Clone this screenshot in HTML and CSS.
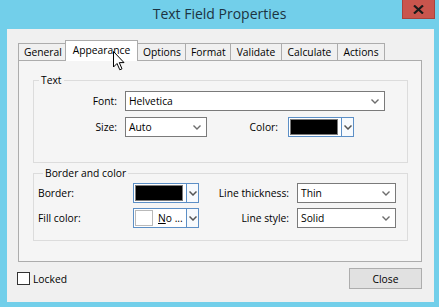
FILE: index.html
```html
<!DOCTYPE html>
<html lang="en">
<head>
<meta charset="UTF-8">
<meta name="viewport" content="width=device-width, initial-scale=1.0">
<title>Text Field Properties</title>
<link rel="stylesheet" href="styles.css">
</head>
<body>
<div class="window">
  <div class="titlebar">
    <span></span>
    <span class="title">Text Field Properties</span>
    <button class="close-x" aria-label="Close">
      <svg width="11" height="9" viewBox="0 0 11 9"><path d="M1 0.5 L10 8.5 M10 0.5 L1 8.5" stroke="#1a1a1a" stroke-width="2.2"/></svg>
    </button>
  </div>

  <div class="client">
    <div class="tabs">
      <div class="tab">General</div>
      <div class="tab active">Appearance</div>
      <div class="tab">Options</div>
      <div class="tab">Format</div>
      <div class="tab">Validate</div>
      <div class="tab">Calculate</div>
      <div class="tab">Actions</div>
    </div>

    <div class="panel">
      <fieldset class="group">
        <legend>Text</legend>
        <div class="row">
          <span class="label right w-font">Font:</span>
          <div class="combo w-260">Helvetica<svg class="chev" width="8" height="5" viewBox="0 0 8 5"><polyline points="0.5,0.5 4,4 7.5,0.5" fill="none" stroke="#6d6d6d" stroke-width="1.4"/></svg></div>
        </div>
        <div class="row">
          <span class="label right w-font">Size:</span>
          <div class="combo w-82">Auto<svg class="chev" width="8" height="5" viewBox="0 0 8 5"><polyline points="0.5,0.5 4,4 7.5,0.5" fill="none" stroke="#6d6d6d" stroke-width="1.4"/></svg></div>
          <span class="label right w-color">Color:</span>
          <div class="picker">
            <span class="swatch black"></span>
            <span class="drop"><svg width="8" height="5" viewBox="0 0 8 5"><polyline points="0.5,0.5 4,4 7.5,0.5" fill="none" stroke="#555" stroke-width="1.5"/></svg></span>
          </div>
        </div>
      </fieldset>

      <fieldset class="group group-border">
        <legend>Border and color</legend>
        <div class="row">
          <span class="label w-border">Border:</span>
          <div class="picker">
            <span class="swatch black"></span>
            <span class="drop"><svg width="8" height="5" viewBox="0 0 8 5"><polyline points="0.5,0.5 4,4 7.5,0.5" fill="none" stroke="#555" stroke-width="1.5"/></svg></span>
          </div>
          <span class="label right w-line">Line thickness:</span>
          <div class="combo w-99">Thin<svg class="chev" width="8" height="5" viewBox="0 0 8 5"><polyline points="0.5,0.5 4,4 7.5,0.5" fill="none" stroke="#6d6d6d" stroke-width="1.4"/></svg></div>
        </div>
        <div class="row">
          <span class="label w-border">Fill color:</span>
          <div class="picker">
            <span class="swatch white"></span>
            <span class="none"><u>N</u>o ...</span>
            <span class="drop"><svg width="8" height="5" viewBox="0 0 8 5"><polyline points="0.5,0.5 4,4 7.5,0.5" fill="none" stroke="#555" stroke-width="1.5"/></svg></span>
          </div>
          <span class="label right w-line">Line style:</span>
          <div class="combo w-99">Solid<svg class="chev" width="8" height="5" viewBox="0 0 8 5"><polyline points="0.5,0.5 4,4 7.5,0.5" fill="none" stroke="#6d6d6d" stroke-width="1.4"/></svg></div>
        </div>
      </fieldset>
    </div>

    <div class="footer">
      <label class="check"><span class="box"></span>Locked</label>
      <button class="btn">Close</button>
    </div>

    <!-- mouse pointer over the Appearance tab -->
    <svg class="cursor" width="13" height="20" viewBox="0 0 13 20">
      <path d="M0.5 0.5 L0.5 16 L4 12.5 L6.8 18.8 L9 17.8 L6.3 11.6 L11 11.6 Z" fill="#fff" stroke="#000" stroke-width="1"/>
    </svg>
  </div>
</div>
</body>
</html>
```

FILE: styles.css
```css
html, body {
  margin: 0;
  padding: 0;
}
body {
  width: 439px;
  height: 307px;
  background-color: #72cfea;
  font-family: "Open Sans", "Noto Sans", sans-serif;
  font-size: 10.3px;
  color: #000;
  overflow: hidden;
}
.window {
  display: flex;
  flex-direction: column;
  height: 307px;
}
.titlebar {
  display: grid;
  grid-template-columns: 1fr auto 1fr;
  height: 29px;
}
.title {
  font-size: 14px;
  line-height: 27px;
  color: #1c3341;
  white-space: nowrap;
}
.close-x {
  justify-self: end;
  align-self: start;
  width: 33px;
  height: 19px;
  margin-right: 4px;
  padding: 0;
  border: 1px solid #a8433c;
  border-top: none;
  background-color: #c9554d;
  display: flex;
  align-items: center;
  justify-content: center;
}
.client {
  position: relative;
  flex: 1;
  margin: 0 5px 5px 7px;
  padding: 11px 12px 0 11px;
  background-color: #f0f0f0;
}
.tabs {
  display: flex;
  align-items: flex-end;
  height: 20px;
}
.tab {
  height: 17px;
  line-height: 16px;
  padding: 0 5px;
  margin-left: -1px;
  border: 1px solid #acacac;
  border-bottom: none;
  background-color: #f0f0f0;
  box-sizing: border-box;
  text-align: center;
  white-space: nowrap;
}
.tab:first-child {
  margin-left: 0;
}
.tab:nth-child(1) { width: 48px; }
.tab:nth-child(2) { width: 73px; }
.tab:nth-child(3) { width: 49px; }
.tab:nth-child(4) { width: 46px; }
.tab:nth-child(5) { width: 52px; }
.tab:nth-child(6) { width: 57px; }
.tab:nth-child(7) { width: 48px; }
.tab.active {
  position: relative;
  z-index: 1;
  height: 21px;
  line-height: 18px;
  margin-bottom: -1px;
  background-color: #ffffff;
}
.panel {
  border: 1px solid #acacac;
  background-color: #f5f5f5;
  padding: 12px 13px 20px 14px;
}
.group {
  margin: 0;
  padding: 4px 0 25px 0;
  border: 1px solid #dcdcdc;
}
.group legend {
  margin-left: 5px;
  padding: 0 2px;
  line-height: 14px;
}
.group-border {
  margin-top: 3px;
  padding: 3px 0 12px 4px;
}
.row {
  display: flex;
  align-items: center;
  height: 20px;
}
.row + .row {
  margin-top: 6px;
}
.group-border .row + .row {
  margin-top: 5px;
}
.label {
  white-space: nowrap;
  box-sizing: border-box;
}
.right {
  text-align: right;
}
.w-font { width: 83px; margin-right: 8px; }
.w-color { width: 71px; margin-right: 10px; }
.w-border { width: 95px; }
.w-line { width: 90px; margin-right: 8px; }
.combo {
  display: flex;
  align-items: center;
  justify-content: space-between;
  height: 20px;
  box-sizing: border-box;
  padding: 0 5px 0 3px;
  border: 1px solid #7a7a7a;
  background-color: #fff;
}
.w-260 { width: 260px; }
.w-82 { width: 82px; }
.w-99 { width: 99px; }
.picker {
  display: flex;
  align-items: stretch;
  width: 66px;
  height: 20px;
  box-sizing: border-box;
  border: 1px solid #5c8fc6;
  background-color: #fff;
}
.swatch {
  width: 46px;
  margin: 1px 0 1px 1px;
  border: 1px solid #7a7a7a;
}
.swatch.black {
  background-color: #000;
}
.swatch.white {
  width: 16px;
  background-color: #fff;
  border-color: #b9b9b9;
}
.none {
  flex: 1;
  padding-left: 5px;
  line-height: 18px;
  white-space: nowrap;
}
.drop {
  margin-left: auto;
  width: 13px;
  box-sizing: border-box;
  margin-top: -1px;
  margin-bottom: -1px;
  margin-right: -1px;
  border: 1px solid #5c8fc6;
  background-color: #f7fafd;
  display: flex;
  align-items: center;
  justify-content: center;
}
.footer {
  display: flex;
  align-items: center;
  justify-content: space-between;
  margin-top: 6px;
}
.check {
  display: flex;
  align-items: center;
  margin-left: -1px;
}
.box {
  width: 13px;
  height: 13px;
  box-sizing: border-box;
  border: 1px solid #333;
  background-color: #fff;
  margin-right: 3px;
}
.btn {
  width: 73px;
  height: 21px;
  padding: 0;
  font-family: inherit;
  font-size: inherit;
  color: #000;
  border: 1px solid #adadad;
  background-color: #e1e1e1;
}
.cursor {
  position: absolute;
  left: 106px;
  top: 22px;
  z-index: 2;
}
```
